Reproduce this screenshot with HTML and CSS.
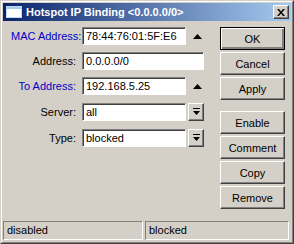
FILE: index.html
```html
<!doctype html>
<html lang="en">
<head>
    <meta charset="utf-8">
    <title>Hotspot IP Binding</title>
    <link rel="stylesheet" href="styles.css">
</head>
<body>
<div class="window">
  <div class="frame">
    <div class="titlebar">
      <svg class="app-icon" width="16" height="12" viewBox="0 0 16 12">
        <rect x="0.5" y="0.5" width="15" height="11" fill="#fff" stroke="#c0d8f0"/>
        <rect x="1" y="1" width="14" height="2" fill="#a6caf0"/>
      </svg>
      <span class="title">Hotspot IP Binding &lt;0.0.0.0/0&gt;</span>
      <span class="close-btn">
        <svg width="8" height="7" viewBox="0 0 8 7">
          <path d="M0 0h2l2 2.5 2-2.5h2l-3 3.5 3 3.5h-2l-2-2.5-2 2.5h-2l3-3.5z" fill="#000"/>
        </svg>
      </span>
    </div>

    <div class="content">
      <div class="form">
        <label class="lbl link">MAC Address:</label>
        <div class="field">78:44:76:01:5F:E6</div>
        <div class="updown"><svg width="9" height="5" viewBox="0 0 9 5"><path d="M4.5 0L9 5H0z" fill="#000"/></svg></div>

        <label class="lbl">Address:</label>
        <div class="field wide">0.0.0.0/0</div>

        <label class="lbl link">To Address:</label>
        <div class="field">192.168.5.25</div>
        <div class="updown"><svg width="9" height="5" viewBox="0 0 9 5"><path d="M4.5 0L9 5H0z" fill="#000"/></svg></div>

        <label class="lbl lower">Server:</label>
        <div class="field lower">all</div>
        <div class="drop lower"><svg width="7" height="8" viewBox="0 0 7 8"><path d="M0 0h7v1H0zM0 3h7L3.5 7z" fill="#000"/></svg></div>

        <label class="lbl lower">Type:</label>
        <div class="field lower">blocked</div>
        <div class="drop lower"><svg width="7" height="8" viewBox="0 0 7 8"><path d="M0 0h7v1H0zM0 3h7L3.5 7z" fill="#000"/></svg></div>
      </div>

      <div class="buttons">
        <div class="btn default">OK</div>
        <div class="btn">Cancel</div>
        <div class="btn">Apply</div>
        <div class="btn spaced">Enable</div>
        <div class="btn">Comment</div>
        <div class="btn">Copy</div>
        <div class="btn">Remove</div>
      </div>
    </div>

    <div class="statusbar">
      <div class="pane left">disabled</div>
      <div class="pane right">blocked</div>
    </div>
  </div>
</div>
</body>
</html>
```

FILE: styles.css
```css
* {
	box-sizing: border-box;
}
body {
	margin: 0;
	font-family: "Liberation Sans", Arial, sans-serif;
	font-size: 11px;
	background: #d4d0c8;
}
.window {
	width: 294px;
	height: 244px;
	border: 1px solid;
	border-color: #d4d0c8 #404040 #404040 #d4d0c8;
	background: #d4d0c8;
}
.frame {
	height: 100%;
	border: 1px solid;
	border-color: #fff #808080 #808080 #fff;
	padding: 1px;
	display: flex;
	flex-direction: column;
}
.titlebar {
	height: 18px;
	display: flex;
	align-items: center;
	background: linear-gradient(to right, #0a246a, #a6caf0);
	padding: 0 2px 0 3px;
}
.app-icon {
	display: block;
	margin-right: 4px;
}
.title {
	flex: 1;
	color: #fff;
	font-weight: bold;
	font-size: 11px;
}
.close-btn {
	width: 16px;
	height: 14px;
	background: #d4d0c8;
	border: 1px solid;
	border-color: #fff #404040 #404040 #fff;
	box-shadow: inset -1px -1px #808080;
	display: flex;
	align-items: center;
	justify-content: center;
}
.close-btn svg {
	display: block;
}

.content {
	flex: 1;
	display: flex;
	padding: 6px 6px 0 8px;
}
.form {
	display: grid;
	grid-template-columns: 71px 104px 18px;
	grid-template-rows: 18px 18px 18px 19px 19px;
	row-gap: 7px;
	align-content: start;
}
.lbl {
	text-align: right;
	align-self: center;
	white-space: nowrap;
	padding-right: 6px;
}
.lbl.link {
	color: #0000c8;
}
.field.lower,
.drop.lower {
	height: 18px;
	align-self: end;
}
.lbl.lower {
	align-self: end;
	line-height: 18px;
}
.field {
	background: #fff;
	border: 1px solid;
	border-color: #808080 #fff #fff #808080;
	box-shadow: inset 1px 1px #404040;
	padding: 0 3px;
	line-height: 16px;
	white-space: nowrap;
}
.field.wide {
	grid-column: 2 / 4;
}
.updown {
	display: flex;
	align-items: center;
	padding-left: 7px;
}
.updown svg,
.drop svg {
	display: block;
}
.drop {
	margin-left: 2px;
	border: 1px solid;
	border-color: #fff #404040 #404040 #fff;
	box-shadow: inset -1px -1px #808080;
	display: flex;
	align-items: center;
	justify-content: center;
}

.buttons {
	margin-left: auto;
	display: flex;
	flex-direction: column;
	gap: 2px;
}
.btn {
	width: 65px;
	height: 23px;
	border: 1px solid;
	border-color: #fff #404040 #404040 #fff;
	box-shadow: inset -1px -1px #808080;
	display: flex;
	align-items: center;
	justify-content: center;
}
.btn.default {
	border-color: #000;
	box-shadow: inset 1px 1px #fff, inset -2px -2px #808080, inset -1px -1px #404040;
}
.btn.spaced {
	margin-top: 9px;
}

.statusbar {
	display: flex;
	gap: 2px;
	padding: 0 2px 1px 0;
}
.pane {
	height: 19px;
	border: 1px solid;
	border-color: #808080 #fff #fff #808080;
	padding: 0 3px;
	line-height: 17px;
}
.pane.left {
	width: 140px;
}
.pane.right {
	flex: 1;
}
```
